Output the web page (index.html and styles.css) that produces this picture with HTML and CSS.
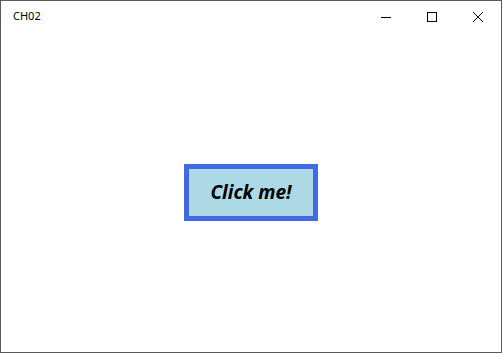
FILE: index.html
```html
<!DOCTYPE html>
<html>
<head>
<meta charset="utf-8">
<link rel="stylesheet" href="styles.css">
</head>
<body>
<div class="window">
  <div class="titlebar">
    <div class="title">CH02</div>
    <div class="controls">
      <div class="ctl"><svg width="10" height="10" viewBox="0 0 10 10"><path d="M0 5.5H10" stroke="#000" stroke-width="1"/></svg></div>
      <div class="ctl"><svg width="10" height="10" viewBox="0 0 10 10"><rect x="0.5" y="0.5" width="9" height="9" fill="none" stroke="#000" stroke-width="1"/></svg></div>
      <div class="ctl"><svg width="10" height="10" viewBox="0 0 10 10"><path d="M0 0L10 10M10 0L0 10" stroke="#000" stroke-width="1"/></svg></div>
    </div>
  </div>
  <div class="content">
    <button class="btn">Click me!</button>
  </div>
</div>
</body>
</html>
```
FILE: styles.css
```css
html, body {
  margin: 0;
  padding: 0;
  background: #fff;
}
.window {
  box-sizing: border-box;
  width: 502px;
  height: 353px;
  border: 1px solid #5a5a5a;
  display: flex;
  flex-direction: column;
  background: #fff;
}
.titlebar {
  height: 31px;
  display: flex;
  align-items: stretch;
  justify-content: space-between;
  flex: none;
}
.title {
  font-family: "Noto Sans", "Open Sans", sans-serif;
  font-size: 11px;
  color: #000;
  padding-left: 12px;
  line-height: 30px;
}
.controls {
  display: flex;
}
.ctl {
  width: 46px;
  display: flex;
  align-items: center;
  justify-content: center;
}
.ctl svg {
  display: block;
}
.content {
  flex: 1;
  display: flex;
  align-items: center;
  justify-content: center;
}
.btn {
  box-sizing: border-box;
  width: 134px;
  height: 57px;
  border: 5px solid #4169e1;
  background: #add8e6;
  font-family: "Open Sans", "Noto Sans", sans-serif;
  font-weight: bold;
  font-style: italic;
  font-size: 19px;
  color: #000;
  padding: 0;
  margin: 0;
}
```
